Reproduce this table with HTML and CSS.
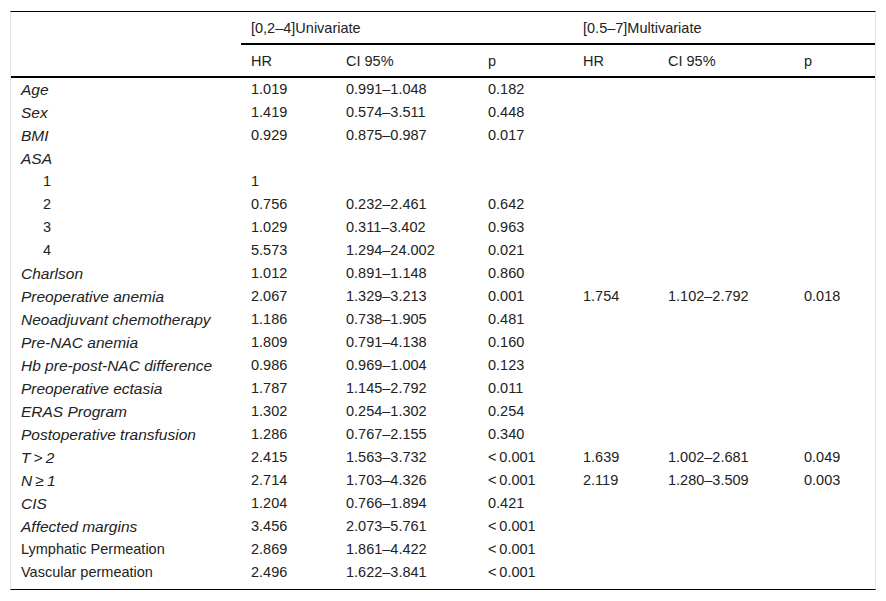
FILE: index.html
```html
<!DOCTYPE html>
<html>
<head>
<meta charset="utf-8">
<link rel="stylesheet" href="styles.css">
</head>
<body>
<table class="tbl">
  <colgroup>
    <col class="c-label"><col class="c-hr"><col class="c-ci"><col class="c-p"><col class="c-hr2"><col class="c-ci2"><col class="c-p2">
  </colgroup>
  <thead>
    <tr class="group-row">
      <th></th>
      <th colspan="3" class="group">[0,2–4]Univariate</th>
      <th colspan="3" class="group">[0.5–7]Multivariate</th>
    </tr>
    <tr class="sub-row">
      <th></th>
      <th>HR</th><th>CI 95%</th><th>p</th>
      <th>HR</th><th>CI 95%</th><th>p</th>
    </tr>
  </thead>
  <tbody>
    <tr><td class="lbl it">Age</td><td>1.019</td><td>0.991–1.048</td><td>0.182</td><td></td><td></td><td></td></tr>
    <tr><td class="lbl it">Sex</td><td>1.419</td><td>0.574–3.511</td><td>0.448</td><td></td><td></td><td></td></tr>
    <tr><td class="lbl it">BMI</td><td>0.929</td><td>0.875–0.987</td><td>0.017</td><td></td><td></td><td></td></tr>
    <tr><td class="lbl it">ASA</td><td></td><td></td><td></td><td></td><td></td><td></td></tr>
    <tr><td class="lbl sub">1</td><td>1</td><td></td><td></td><td></td><td></td><td></td></tr>
    <tr><td class="lbl sub">2</td><td>0.756</td><td>0.232–2.461</td><td>0.642</td><td></td><td></td><td></td></tr>
    <tr><td class="lbl sub">3</td><td>1.029</td><td>0.311–3.402</td><td>0.963</td><td></td><td></td><td></td></tr>
    <tr><td class="lbl sub">4</td><td>5.573</td><td>1.294–24.002</td><td>0.021</td><td></td><td></td><td></td></tr>
    <tr><td class="lbl it">Charlson</td><td>1.012</td><td>0.891–1.148</td><td>0.860</td><td></td><td></td><td></td></tr>
    <tr><td class="lbl it">Preoperative anemia</td><td>2.067</td><td>1.329–3.213</td><td>0.001</td><td>1.754</td><td>1.102–2.792</td><td>0.018</td></tr>
    <tr><td class="lbl it">Neoadjuvant chemotherapy</td><td>1.186</td><td>0.738–1.905</td><td>0.481</td><td></td><td></td><td></td></tr>
    <tr><td class="lbl it">Pre-NAC anemia</td><td>1.809</td><td>0.791–4.138</td><td>0.160</td><td></td><td></td><td></td></tr>
    <tr><td class="lbl it">Hb pre-post-NAC difference</td><td>0.986</td><td>0.969–1.004</td><td>0.123</td><td></td><td></td><td></td></tr>
    <tr><td class="lbl it">Preoperative ectasia</td><td>1.787</td><td>1.145–2.792</td><td>0.011</td><td></td><td></td><td></td></tr>
    <tr><td class="lbl it">ERAS Program</td><td>1.302</td><td>0.254–1.302</td><td>0.254</td><td></td><td></td><td></td></tr>
    <tr><td class="lbl it">Postoperative transfusion</td><td>1.286</td><td>0.767–2.155</td><td>0.340</td><td></td><td></td><td></td></tr>
    <tr><td class="lbl it">T&#8201;&gt;&#8201;2</td><td>2.415</td><td>1.563–3.732</td><td>&lt;&#8201;0.001</td><td>1.639</td><td>1.002–2.681</td><td>0.049</td></tr>
    <tr><td class="lbl it">N&#8201;≥&#8201;1</td><td>2.714</td><td>1.703–4.326</td><td>&lt;&#8201;0.001</td><td>2.119</td><td>1.280–3.509</td><td>0.003</td></tr>
    <tr><td class="lbl it">CIS</td><td>1.204</td><td>0.766–1.894</td><td>0.421</td><td></td><td></td><td></td></tr>
    <tr><td class="lbl it">Affected margins</td><td>3.456</td><td>2.073–5.761</td><td>&lt;&#8201;0.001</td><td></td><td></td><td></td></tr>
    <tr><td class="lbl">Lymphatic Permeation</td><td>2.869</td><td>1.861–4.422</td><td>&lt;&#8201;0.001</td><td></td><td></td><td></td></tr>
    <tr class="last"><td class="lbl">Vascular permeation</td><td>2.496</td><td>1.622–3.841</td><td>&lt;&#8201;0.001</td><td></td><td></td><td></td></tr>
  </tbody>
</table>
</body>
</html>
```

FILE: styles.css
```css
html, body {
  margin: 0;
  padding: 0;
  background: #fff;
}
body {
  padding: 11px 10px 0 10px;
  font-family: "Liberation Sans", Arial, sans-serif;
  font-size: 14.5px;
  color: #222;
}
.tbl {
  width: 866px;
  table-layout: fixed;
  border-collapse: separate;
  border-spacing: 0;
  border-top: 1px solid #000;
  border-bottom: 1px solid #000;
  border-left: 1px solid #e4e4e4;
  border-right: 1px solid #e4e4e4;
}
.c-label { width: 230px; }
.c-hr { width: 95px; }
.c-ci { width: 142px; }
.c-p { width: 95px; }
.c-hr2 { width: 85px; }
.c-ci2 { width: 136px; }
.c-p2 { width: 81px; }

th, td {
  padding: 0 10px;
  text-align: left;
  font-weight: normal;
  white-space: nowrap;
  vertical-align: middle;
}
.group-row th {
  height: 31px;
}
.group-row th.group {
  border-bottom: 2px solid #000;
}
.sub-row th {
  height: 31px;
  border-bottom: 2px solid #000;
}
tbody td {
  height: 23px;
  line-height: 23px;
}
tbody tr.last td {
  height: 28px;
  vertical-align: top;
}
td.lbl {
  padding-left: 10px;
}
td.it {
  font-style: italic;
  font-size: 15.5px;
}
td.sub {
  padding-left: 32px;
}
```
